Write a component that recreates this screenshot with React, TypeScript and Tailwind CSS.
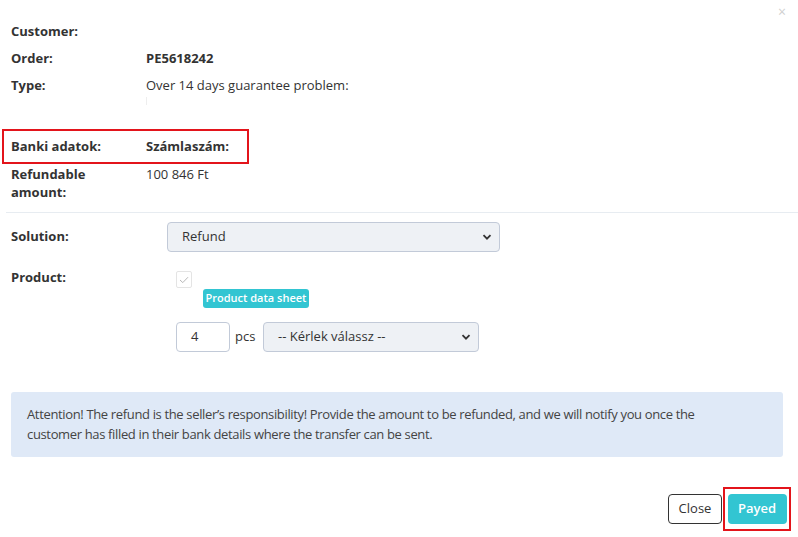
import React from "react";

const font = { fontFamily: '"Open Sans", "Liberation Sans", sans-serif' };

const Chevron = () => (
  <svg width="10" height="10" viewBox="0 0 10 10" className="absolute right-[7px] top-1/2 -translate-y-1/2">
    <path d="M1.5 3.2 L5 6.7 L8.5 3.2" fill="none" stroke="#333" strokeWidth="1.8" />
  </svg>
);

export default function App() {
  return (
    <div className="relative w-[798px] h-[537px] bg-white text-[13px] text-[#333] overflow-hidden" style={font}>
      <button className="absolute right-[12px] top-[5px] text-[#d0d0d0] text-[14px] leading-none">×</button>

      <div className="pt-[22px]">
        <div className="flex h-[27px] px-[11px]">
          <div className="w-[135px] font-bold leading-[18px]">Customer:</div>
        </div>
        <div className="flex h-[27px] px-[11px]">
          <div className="w-[135px] font-bold leading-[18px]">Order:</div>
          <div className="font-bold leading-[18px]">PE5618242</div>
        </div>
        <div className="flex h-[36px] px-[11px]">
          <div className="w-[135px] font-bold leading-[18px]">Type:</div>
          <div className="flex flex-col">
            <div className="leading-[18px]">Over 14 days guarantee problem:</div>
            <div className="w-px h-[8px] bg-[#eeeeee] mt-[3px]" />
          </div>
        </div>

        <div className="mt-[17px] ml-[2px] w-[247px] h-[35px] border-2 border-[#e3141b] flex items-center pl-[7px]">
          <div className="w-[135px] font-bold">Banki adatok:</div>
          <div className="font-bold">Számlaszám:</div>
        </div>

        <div className="flex px-[11px] leading-[18px] mt-[1px]">
          <div className="w-[135px] font-bold pr-[40px]">Refundable amount:</div>
          <div>100 846 Ft</div>
        </div>

        <div className="ml-[6px] mt-[11px] border-t border-[#e7ecf1]" />

        <div className="flex items-center px-[11px] mt-[9px]">
          <div className="w-[156px] font-bold">Solution:</div>
          <div className="relative w-[333px] h-[30px] bg-[#eef1f5] border border-[#c2cad8] rounded-[4px] flex items-center pl-[14px]">
            Refund
            <Chevron />
          </div>
        </div>

        <div className="flex px-[11px] mt-[19px]">
          <div className="w-[165px] font-bold leading-[18px] mt-[-3px]">Product:</div>
          <div className="flex flex-col">
            <div className="w-[16px] h-[17px] border border-[#e4e4e4] rounded-[2px] flex items-center justify-center">
              <svg width="10" height="8" viewBox="0 0 10 8">
                <path d="M1 4 L3.8 6.6 L9 1.2" fill="none" stroke="#b8b8b8" strokeWidth="1" />
              </svg>
            </div>
            <div className="ml-[27px] mt-[1px] w-[106px] h-[19px] shrink-0 bg-[#32c5d2] text-white text-[11px] font-semibold rounded-[3px] flex items-center justify-center">
              Product data sheet
            </div>
            <div className="flex items-center mt-[14px]">
              <div className="w-[54px] h-[30px] border border-[#c2cad8] rounded-[4px] flex items-center pl-[14px]">4</div>
              <span className="ml-[5px] w-[28px]">pcs</span>
              <div className="relative w-[216px] h-[30px] bg-[#eef1f5] border border-[#c2cad8] rounded-[4px] flex items-center pl-[14px]">
                -- Kérlek válassz --
                <Chevron />
              </div>
            </div>
          </div>
        </div>

        <div className="mx-[11px] mt-[40px] w-[772px] h-[65px] bg-[#dfe9f7] rounded-[3px] pl-[16px] pr-[60px] pt-[12px] text-[13px] leading-[20px] tracking-[-0.35px] text-[#444]">
          Attention! The refund is the seller’s responsibility! Provide the amount to be refunded, and we will notify you once the customer has filled in their bank details where the transfer can be sent.
        </div>

        <div className="flex justify-end items-center mt-[30px] pr-[7px]">
          <button className="w-[54px] h-[30px] border border-[#333] rounded-[4px] text-[13px] text-[#333] bg-white">Close</button>
          <div className="ml-[1px] border-2 border-[#e3141b] w-[68px] h-[44px] flex items-center justify-center">
            <button className="w-[59px] h-[30px] bg-[#32c5d2] rounded-[4px] text-white text-[13px] font-semibold">Payed</button>
          </div>
        </div>
      </div>
    </div>
  );
}
